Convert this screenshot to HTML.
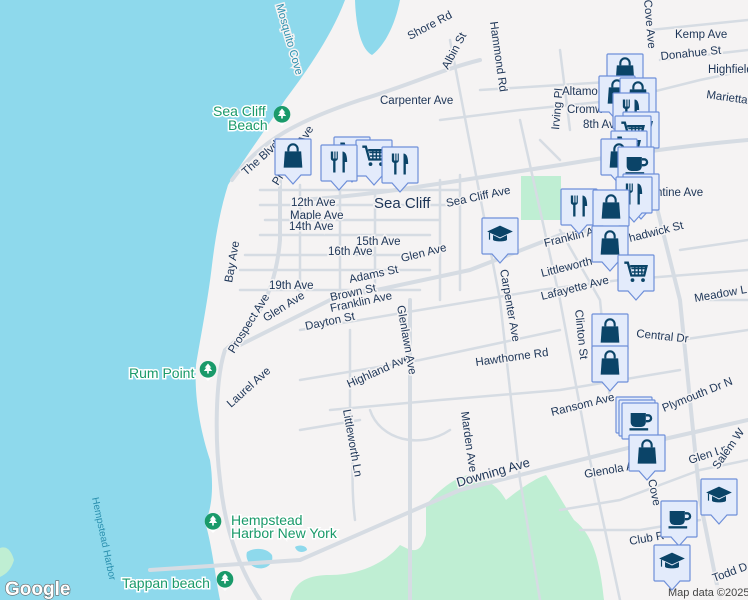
<!DOCTYPE html>
<html><head><meta charset="utf-8"><style>
html,body{margin:0;padding:0;width:748px;height:600px;overflow:hidden;background:#f5f3f3}
svg{display:block}
text{font-family:"Liberation Sans",sans-serif}
.l{font-size:11.5px;fill:#1d3557;stroke:#f5f3f3;stroke-width:3px;paint-order:stroke}
.g{font-size:14px;fill:#1a9a6a;stroke:#fff;stroke-width:3px;paint-order:stroke}
</style></head><body>
<svg width="748" height="600" viewBox="0 0 748 600" xmlns="http://www.w3.org/2000/svg">
<defs>
<symbol id="bag" viewBox="0 0 24 24"><path d="M8 8V6a4 4 0 0 1 8 0v2" fill="none" stroke="#0b4468" stroke-width="1.8"/><path d="M5 8h14l1 14H4z" fill="#0b4468"/></symbol>
<symbol id="fork" viewBox="0 0 24 24"><path d="M5 3v6a2 2 0 0 0 2 2v10h2V11a2 2 0 0 0 2-2V3h-1v6H9V3H8v6H7V3z M15 3c3 0 4 4 4 9h-2v9h-2z" fill="#0b4468"/></symbol>
<symbol id="cart" viewBox="0 0 24 24"><path d="M2 4h3l3 11h11l2-8H7" fill="none" stroke="#0b4468" stroke-width="2"/><path d="M8 9h12M8.5 12h10M11 7v8M14 7v8M17 7v8" stroke="#0b4468" stroke-width="1.2"/><circle cx="9" cy="19" r="1.6" fill="#0b4468"/><circle cx="18" cy="19" r="1.6" fill="#0b4468"/></symbol>
<symbol id="cup" viewBox="0 0 24 24"><path d="M4 6h13v8a4 4 0 0 1-4 4H8a4 4 0 0 1-4-4z" fill="#0b4468"/><path d="M17 8h2a2 2 0 0 1 0 5h-2" fill="none" stroke="#0b4468" stroke-width="2"/><rect x="3" y="19" width="16" height="2" fill="#0b4468"/></symbol>
<symbol id="cap" viewBox="0 0 24 24"><path d="M1 9l11-5 11 5-11 5z" fill="#0b4468"/><path d="M6 12v4c0 2 12 2 12 0v-4l-6 3z" fill="#0b4468"/><path d="M3 10v6" stroke="#0b4468" stroke-width="1"/></symbol>
<symbol id="mk" viewBox="0 0 38 48"><path d="M2 1h34a1 1 0 0 1 1 1v34a1 1 0 0 1-1 1H27l-8 9-8-9H2a1 1 0 0 1-1-1V2a1 1 0 0 1 1-1z" fill="#e3ebfb" stroke="#6e8fd9" stroke-width="1.2"/></symbol>
<symbol id="tree" viewBox="0 0 24 28"><path d="M12 26l-5-5a10 10 0 1 1 10 0z" fill="#fff"/><circle cx="12" cy="12" r="10" fill="#1a9a6a"/><path d="M12 5l-4 5h2l-3 4h4v3h2v-3h4l-3-4h2z" fill="#fff"/></symbol>
</defs>
<rect width="748" height="600" fill="#f5f3f3"/>
<path d="M0 0H345C330 40 300 80 285 100C265 130 240 165 228 185C220 210 215 240 212 265C208 300 200 340 196 365C194 395 200 430 210 460C214 485 212 510 205 522C212 545 215 575 220 600H0Z" fill="#8ed9ec"/>
<path d="M355 0H400C395 25 385 45 372 55C362 50 356 30 355 0Z" fill="#8ed9ec"/>
<path d="M247 552c8-5 20-4 25 3c2 8-5 15-15 13c-8-2-12-10-10-16z" fill="#8ed9ec"/>
<path d="M295 547c5-3 12-1 12 3c-4 3-10 3-12-3z" fill="#8ed9ec"/>
<path d="M0 548c8-3 12 5 14 12c-3 10-8 14-14 17z" fill="#bfeed3"/>
<path d="M426 505c10-12 30-30 45-30c15 5 25 8 35 25c15-12 30-22 40-25c10 15 18 30 28 45c15 12 25 30 30 80H290c5-20 20-25 40-25c30 0 55-12 70-30c10 5 20 12 26-10z" fill="#bfeed3"/>
<rect x="521" y="176" width="40" height="44" fill="#bfeed3"/>
<g fill="none" stroke="#d6dce3" stroke-linecap="round" stroke-linejoin="round">
<g stroke-width="4">
<path d="M232 180C260 140 300 120 360 100C410 85 440 70 480 60"/>
<path d="M280 160V240C275 300 250 330 225 350C215 380 215 440 220 480C225 530 240 570 260 600"/>
<path d="M230 350L330 300L470 270L560 235L620 225"/>
<path d="M300 200C380 195 460 180 560 165C620 155 690 145 748 140"/>
<path d="M150 570L300 560L460 490L560 465L660 440L748 420"/>
<path d="M410 300V600"/>
<path d="M620 60L680 300L700 500L720 600"/>
</g>
<g stroke-width="2.5">
<path d="M260 190H460M260 205H450M265 220H440M260 235H430M245 255H420M240 270H430M240 290H420"/>
<path d="M300 185V300M340 185V300M375 190V300M440 180V300M460 175V290"/>
<path d="M450 40L500 300L520 480L540 600"/>
<path d="M520 120L560 300L590 460L620 600"/>
<path d="M300 330L420 310L540 290L620 280L748 270"/>
<path d="M300 380L420 360L560 330"/>
<path d="M330 410L440 400L560 390L680 370"/>
<path d="M560 510L620 500L700 470L748 460"/>
<path d="M580 530L640 530L700 520"/>
<path d="M440 120L520 110L620 100L700 80L748 70"/>
<path d="M480 90L560 85L640 80"/>
<path d="M540 140L560 160M560 50L570 130"/>
<path d="M650 30L748 20M660 60L748 50"/>
<path d="M680 250L748 240M700 300L748 300M680 340L748 330"/>
<path d="M350 330V420C355 450 350 480 355 520"/>
<path d="M560 230L600 300L610 400"/>
<path d="M370 410C380 440 420 450 450 430"/>
<path d="M300 430L360 420"/>
</g>
</g>
<text class="l" transform="translate(276 5) rotate(74)" style="fill:#2a8fae;font-size:11px">Mosquito Cove</text>
<text class="l" transform="translate(410 40) rotate(-28)">Shore Rd</text>
<text class="l" transform="translate(448 70) rotate(-62)">Albin St</text>
<text class="l" transform="translate(490 22) rotate(82)">Hammond Rd</text>
<text class="l" x="380" y="104">Carpenter Ave</text>
<text class="l" transform="translate(559 130) rotate(-85)">Irving Pl</text>
<text class="l" x="562" y="95">Altamo</text>
<text class="l" x="567" y="113">Cromw</text>
<text class="l" x="583" y="128">8th Av</text>
<text class="l" x="675" y="38">Kemp Ave</text>
<text class="l" x="661" y="60" transform="rotate(-6 661 60)">Donahue St</text>
<text class="l" x="708" y="73">Highfield</text>
<text class="l" x="706" y="98" transform="rotate(8 706 98)">Marietta</text>
<text class="l" transform="translate(644 0) rotate(85)">Cove Ave</text>
<text class="l" transform="translate(246 176) rotate(-42)">The Blvd</text>
<text class="l" transform="translate(278 186) rotate(-58)">Prospect Ave</text>
<text class="l" x="291" y="206">12th Ave</text>
<text class="l" x="290" y="219">Maple Ave</text>
<text class="l" x="289" y="230">14th Ave</text>
<text class="l" x="356" y="245">15th Ave</text>
<text class="l" x="328" y="255">16th Ave</text>
<text class="l" x="269" y="289">19th Ave</text>
<text class="l" transform="translate(232 283) rotate(-80)">Bay Ave</text>
<text class="l" x="374" y="208" style="font-size:15px">Sea Cliff</text>
<text class="l" transform="translate(447 207) rotate(-12)">Sea Cliff Ave</text>
<text class="l" transform="translate(402 262) rotate(-14)">Glen Ave</text>
<text class="l" transform="translate(350 283) rotate(-12)">Adams St</text>
<text class="l" transform="translate(331 301) rotate(-12)">Brown St</text>
<text class="l" transform="translate(331 312) rotate(-12)">Franklin Ave</text>
<text class="l" transform="translate(306 330) rotate(-12)">Dayton St</text>
<text class="l" transform="translate(266 322) rotate(-32)">Glen Ave</text>
<text class="l" transform="translate(234 354) rotate(-58)">Prospect Ave</text>
<text class="l" transform="translate(231 408) rotate(-42)">Laurel Ave</text>
<text class="l" transform="translate(349 388) rotate(-24)">Highland Ave</text>
<text class="l" transform="translate(397 306) rotate(80)">Glenlawn Ave</text>
<text class="l" transform="translate(343 410) rotate(80)">Littleworth Ln</text>
<text class="l" transform="translate(461 412) rotate(82)">Marden Ave</text>
<text class="l" transform="translate(500 270) rotate(80)">Carpenter Ave</text>
<text class="l" transform="translate(476 366) rotate(-8)">Hawthorne Rd</text>
<text class="l" transform="translate(545 247) rotate(-14)">Franklin A</text>
<text class="l" transform="translate(542 277) rotate(-14)">Littleworth</text>
<text class="l" transform="translate(542 300) rotate(-14)">Lafayette Ave</text>
<text class="l" transform="translate(575 310) rotate(84)">Clinton St</text>
<text class="l" transform="translate(636 337) rotate(6)">Central Dr</text>
<text class="l" transform="translate(552 416) rotate(-14)">Ransom Ave</text>
<text class="l" transform="translate(458 487) rotate(-16)" style="font-size:13px">Downing Ave</text>
<text class="l" transform="translate(585 478) rotate(-10)">Glenola A</text>
<text class="l" transform="translate(630 242) rotate(-14)">hadwick St</text>
<text class="l" x="656" y="196">ntine Ave</text>
<text class="l" x="695" y="302" transform="rotate(-10 695 302)">Meadow L</text>
<text class="l" transform="translate(664 412) rotate(-22)">Plymouth Dr N</text>
<text class="l" transform="translate(690 464) rotate(-18)">Glen Ln</text>
<text class="l" transform="translate(718 470) rotate(-55)">Salem W</text>
<text class="l" transform="translate(630 545) rotate(-10)">Club R</text>
<text class="l" transform="translate(714 582) rotate(-20)">Todd D</text>
<text class="l" transform="translate(648 480) rotate(78)">Cove</text>
<text class="l" transform="translate(92 498) rotate(78)" style="fill:#2a8fae;font-size:10px;stroke:none">Hempstead Harbor</text>
<text class="g" x="213" y="116">Sea Cliff</text>
<text class="g" x="228" y="130">Beach</text>
<use href="#tree" x="272" y="104" width="20" height="24"/>
<text class="g" x="129" y="378">Rum Point</text>
<use href="#tree" x="198" y="359" width="20" height="24"/>
<text class="g" x="231" y="525">Hempstead</text>
<text class="g" x="231" y="538">Harbor New York</text>
<use href="#tree" x="203" y="511" width="20" height="24"/>
<text class="g" x="122" y="588">Tappan beach</text>
<use href="#tree" x="215" y="569" width="20" height="24"/>
<text x="5" y="595" style="font-size:19px;font-weight:bold;fill:#fff;stroke:#666;stroke-width:1.2px;paint-order:stroke">Google</text>
<rect x="665" y="585" width="83" height="15" fill="#f5f3f3" opacity=".8"/>
<text x="668" y="596" style="font-size:11px;fill:#444">Map data ©2025</text>
<g>
<use href="#mk" x="333" y="136" width="38" height="48"/><use href="#cart" x="338" y="139" width="28" height="28"/>
<use href="#mk" x="355" y="139" width="38" height="48"/><use href="#cart" x="360" y="142" width="28" height="28"/>
<use href="#mk" x="274" y="138" width="38" height="48"/><use href="#bag" x="279" y="142" width="28" height="28"/>
<use href="#mk" x="320" y="144" width="38" height="48"/><use href="#fork" x="325" y="148" width="28" height="28"/>
<use href="#mk" x="381" y="146" width="38" height="48"/><use href="#fork" x="386" y="150" width="28" height="28"/>
<use href="#mk" x="606" y="53" width="38" height="48"/><use href="#bag" x="611" y="56" width="28" height="28"/>
<use href="#mk" x="598" y="75" width="38" height="48"/><use href="#bag" x="603" y="78" width="28" height="28"/>
<use href="#mk" x="619" y="77" width="38" height="48"/><use href="#bag" x="624" y="80" width="28" height="28"/>
<use href="#mk" x="612" y="92" width="38" height="48"/><use href="#fork" x="617" y="96" width="28" height="28"/>
<use href="#mk" x="622" y="111" width="38" height="48"/><use href="#cart" x="627" y="114" width="28" height="28"/>
<use href="#mk" x="614" y="115" width="38" height="48"/><use href="#cart" x="619" y="118" width="28" height="28"/>
<use href="#mk" x="610" y="130" width="38" height="48"/><use href="#cart" x="615" y="133" width="28" height="28"/>
<use href="#mk" x="600" y="138" width="38" height="48"/><use href="#bag" x="605" y="142" width="28" height="28"/>
<use href="#mk" x="617" y="146" width="38" height="48"/><use href="#cup" x="622" y="150" width="28" height="28"/>
<use href="#mk" x="622" y="173" width="38" height="48"/><use href="#fork" x="627" y="177" width="28" height="28"/>
<use href="#mk" x="615" y="176" width="38" height="48"/><use href="#fork" x="620" y="180" width="28" height="28"/>
<use href="#mk" x="560" y="188" width="38" height="48"/><use href="#fork" x="565" y="192" width="28" height="28"/>
<use href="#mk" x="592" y="189" width="38" height="48"/><use href="#bag" x="597" y="193" width="28" height="28"/>
<use href="#mk" x="591" y="225" width="38" height="48"/><use href="#bag" x="596" y="229" width="28" height="28"/>
<use href="#mk" x="617" y="254" width="38" height="48"/><use href="#cart" x="622" y="258" width="28" height="28"/>
<use href="#mk" x="481" y="217" width="38" height="48"/><use href="#cap" x="486" y="221" width="28" height="28"/>
<use href="#mk" x="591" y="313" width="38" height="48"/><use href="#bag" x="596" y="317" width="28" height="28"/>
<use href="#mk" x="591" y="345" width="38" height="48"/><use href="#bag" x="596" y="349" width="28" height="28"/>
<use href="#mk" x="615" y="396" width="38" height="48"/>
<use href="#mk" x="618" y="399" width="38" height="48"/>
<use href="#mk" x="621" y="402" width="38" height="48"/><use href="#cup" x="626" y="406" width="28" height="28"/>
<use href="#mk" x="628" y="434" width="38" height="48"/><use href="#bag" x="633" y="438" width="28" height="28"/>
<use href="#mk" x="700" y="478" width="38" height="48"/><use href="#cap" x="705" y="482" width="28" height="28"/>
<use href="#mk" x="660" y="500" width="38" height="48"/><use href="#cup" x="665" y="504" width="28" height="28"/>
<use href="#mk" x="653" y="544" width="38" height="48"/><use href="#cap" x="658" y="548" width="28" height="28"/>
</g>
</svg>
</body></html>
